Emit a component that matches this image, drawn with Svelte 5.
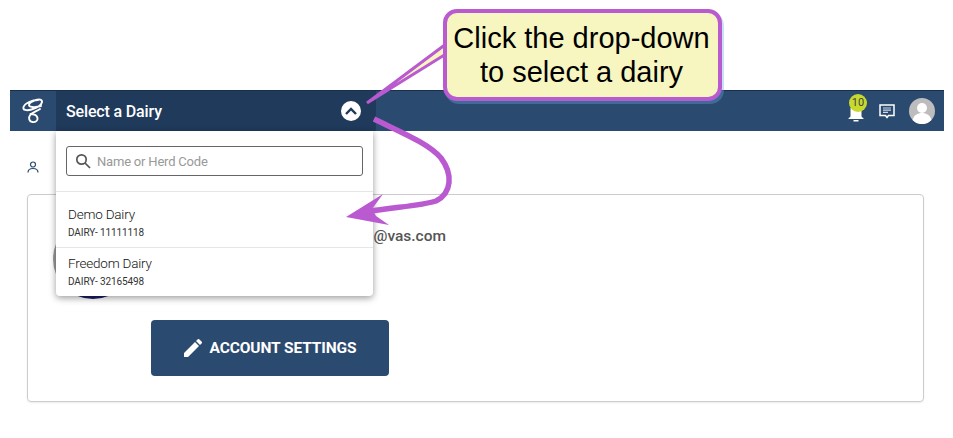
<script>
  const dairies = [
    { name: 'Demo Dairy', code: 'DAIRY- 11111118' },
    { name: 'Freedom Dairy', code: 'DAIRY- 32165498' }
  ];
</script>

<div class="page">
  <header class="nav">
    <div class="logo">
      <svg width="24" height="28" viewBox="0 0 24 28" fill="none" stroke="#fff" stroke-width="1.900" stroke-linecap="round">
        <path d="M17 3C11 3 4 6 2.500 10c-1 3 3 4 8 2.500 5-1.500 10-4.500 10.500-7.500.3-2.500-3-3-6-2-3 1-7 3-7 5 0 2 5 3 12 1"/>
        <path d="M19 12c-3 2-7 3-9.500 5.500-2.500 3-1.500 7 2 7.500 3 .5 5.500-1.500 5-4-.5-2.500-3.500-4-7-4"/>
      </svg>
    </div>
    <div class="select">
      <span class="select-label">Select a Dairy</span>
      <span class="toggle">
        <svg width="12" height="8" viewBox="0 0 12 8" fill="none" stroke="#1f3a5b" stroke-width="2.400"><path d="M1 7l5-5 5 5"/></svg>
      </span>
      <div class="menu">
        <div class="search-row">
          <div class="search">
            <svg width="16" height="16" viewBox="0 0 16 16" fill="none" stroke="#555" stroke-width="1.700"><circle cx="6.500" cy="6.500" r="4.700"/><path d="M10 10l5 5"/></svg>
            <span>Name or Herd Code</span>
          </div>
        </div>
        {#each dairies as dairy}
          <div class="item">
            <div class="name">{dairy.name}</div>
            <div class="code">{dairy.code}</div>
          </div>
        {/each}
      </div>
    </div>
    <div class="actions">
      <div class="bell">
        <svg width="18" height="20" viewBox="0 0 18 20" fill="#fff"><path d="M3.500 6h11v8.500l2.500 2.500H1l2.500-2.500z"/><path d="M6.500 18h5v1.500h-5z"/></svg>
        <span class="badge">10</span>
      </div>
      <svg width="16" height="15" viewBox="0 0 16 15" fill="none"><path d="M1 1h14v10.500H9.500L8 13.500l-1.500-2H1z" stroke="#fff" stroke-width="1.500"/><path d="M4 4h8M4 6.200h8M4 8.400h5" stroke="#cfd8e3" stroke-width="1.200"/></svg>
      <div class="user">
        <svg width="26" height="26" viewBox="0 0 26 26"><circle cx="13" cy="13" r="13" fill="#bdbdbd"/><circle cx="13" cy="10" r="5" fill="#fff"/><path d="M3.500 22c1.500-5 5-7 9.500-7s8 2 9.500 7a13 13 0 0 1-19 0z" fill="#fff"/></svg>
      </div>
    </div>
  </header>

  <div class="crumb">
    <svg width="14" height="14" viewBox="0 0 14 14" fill="none" stroke="#2b4a70" stroke-width="1.200"><circle cx="7" cy="4.500" r="2.500"/><path d="M2 12.500c0-3 2.200-4 5-4s5 1 5 4"/></svg>
  </div>

  <section class="card">
    <div class="avatar"></div>
    <div class="info">
      <div class="email">@vas.com</div>
      <button class="settings">
        <svg width="18" height="18" viewBox="0 0 18 18" fill="#fff"><path d="M0 18v-4L11 3l4 4L4 18zM12 2l1.500-1.500a1.400 1.400 0 0 1 2 0l2 2a1.400 1.400 0 0 1 0 2L16 6z"/></svg>
        ACCOUNT SETTINGS
      </button>
    </div>
  </section>

  <svg class="marks" width="953" height="438" viewBox="0 0 953 438">
    <path d="M446 44L367 103 446 54z" fill="#f7f5c0" stroke="#b95ad0" stroke-width="3"/>
    <path d="M374 119C400 132 428 143 441 158 453 174 452 193 436 201 420 206 395 207 366 212" fill="none" stroke="#b95ad0" stroke-width="5.500"/>
    <path d="M346 217L383 194 372 209 376 216 389 225z" fill="#b95ad0"/>
  </svg>
  <div class="callout">Click the drop-down<br />to select a dairy</div>
</div>

<style>
  :global(body) {
    margin: 0;
    background: #fff;
  }

  .page {
    position: relative;
    width: 953px;
    height: 438px;
    padding: 90px 9px 0 10px;
    box-sizing: border-box;
    overflow: hidden;
    font-family: Roboto, "Liberation Sans", sans-serif;
    color: #333;
  }

  .nav {
    display: flex;
    align-items: stretch;
    height: 41px;
    background: #2b4a70;
    border-top: 1px solid #1a2f4a;
    box-sizing: border-box;
  }

  .logo {
    display: flex;
    align-items: center;
    justify-content: center;
    width: 46px;
  }

  .select {
    position: relative;
    display: flex;
    align-items: center;
    justify-content: space-between;
    width: 320px;
    padding: 0 15px 0 10px;
    box-sizing: border-box;
    background: #1f3a5b;
    color: #fff;
    font-size: 16px;
    font-weight: 500;
  }

  .select-label {
    letter-spacing: -0.15px;
  }

  .toggle {
    display: flex;
    align-items: center;
    justify-content: center;
    width: 20px;
    height: 20px;
    border-radius: 50%;
    background: #fff;
  }

  .menu {
    position: absolute;
    top: 40px;
    left: 0;
    width: 317px;
    height: 165px;
    background: #fff;
    color: #333;
    border-radius: 0 0 4px 4px;
    box-shadow: 0 2px 7px rgba(0, 0, 0, 0.4);
    font-weight: 400;
    z-index: 2;
  }

  .search-row {
    padding: 15px 10px 15px;
    border-bottom: 1px solid #e6e6e6;
  }

  .search {
    display: flex;
    align-items: center;
    gap: 6px;
    height: 30px;
    padding-left: 8px;
    box-sizing: border-box;
    border: 1px solid #666;
    border-radius: 3px;
    color: #999;
    font-size: 13px;
    letter-spacing: -0.2px;
  }

  .item {
    padding: 14px 12px 8px;
    border-bottom: 1px solid #e6e6e6;
  }

  .item:last-child {
    padding-top: 7px;
    border-bottom: 0;
  }

  .name {
    color: #111;
    font-size: 13.500px;
    font-weight: 300;
    line-height: 16px;
    letter-spacing: -0.2px;
  }

  .code {
    margin-top: 4px;
    font-size: 10px;
    line-height: 13px;
    letter-spacing: -0.1px;
  }

  .actions {
    display: flex;
    align-items: center;
    gap: 14px;
    margin-left: auto;
    padding-right: 9px;
  }

  .bell {
    position: relative;
    display: flex;
    margin-top: 2px;
  }

  .badge {
    position: absolute;
    top: -8px;
    left: 2px;
    width: 18px;
    height: 18px;
    border-radius: 50%;
    background: #c8d92e;
    color: #444;
    font-size: 11px;
    line-height: 18px;
    text-align: center;
  }

  .user {
    display: flex;
  }

  .crumb {
    display: flex;
    height: 63px;
    padding: 29px 0 0 16px;
    box-sizing: border-box;
  }

  .card {
    display: flex;
    height: 208px;
    width: 897px;
    margin-left: 17px;
    padding: 24px 0 0 25px;
    box-sizing: border-box;
    border: 1px solid #ccc;
    border-radius: 4px;
    box-shadow: 0 1px 2px rgba(0, 0, 0, 0.08);
  }

  .avatar {
    width: 80px;
    height: 80px;
    flex: none;
    border-radius: 50%;
    background: linear-gradient(#999 80%, #1d1d6b 80%);
  }

  .info {
    margin-left: 18px;
  }

  .email {
    width: 295px;
    margin-top: 8px;
    text-align: right;
    font-size: 15.500px;
    font-weight: 500;
    color: #555;
  }

  .settings {
    display: flex;
    align-items: center;
    justify-content: center;
    gap: 8px;
    width: 238px;
    height: 56px;
    margin-top: 75px;
    border: 0;
    border-radius: 4px;
    background: #2b4a70;
    color: #fff;
    font-family: inherit;
    font-size: 15.500px;
    font-weight: 700;
    letter-spacing: -0.1px;
  }

  .marks {
    position: absolute;
    top: 0;
    left: 0;
    z-index: 3;
    pointer-events: none;
  }

  .callout {
    position: absolute;
    top: 9px;
    left: 443px;
    width: 279px;
    height: 92px;
    box-sizing: border-box;
    padding: 8px 2px 0 0;
    background: #f7f5c0;
    border: 4px solid #b95ad0;
    border-radius: 14px;
    box-shadow: 2px 3px 0 rgba(100, 170, 230, 0.35);
    color: #000;
    font-family: "Liberation Sans", Arial, sans-serif;
    font-size: 29px;
    line-height: 34px;
    text-align: center;
    z-index: 4;
  }
</style>
